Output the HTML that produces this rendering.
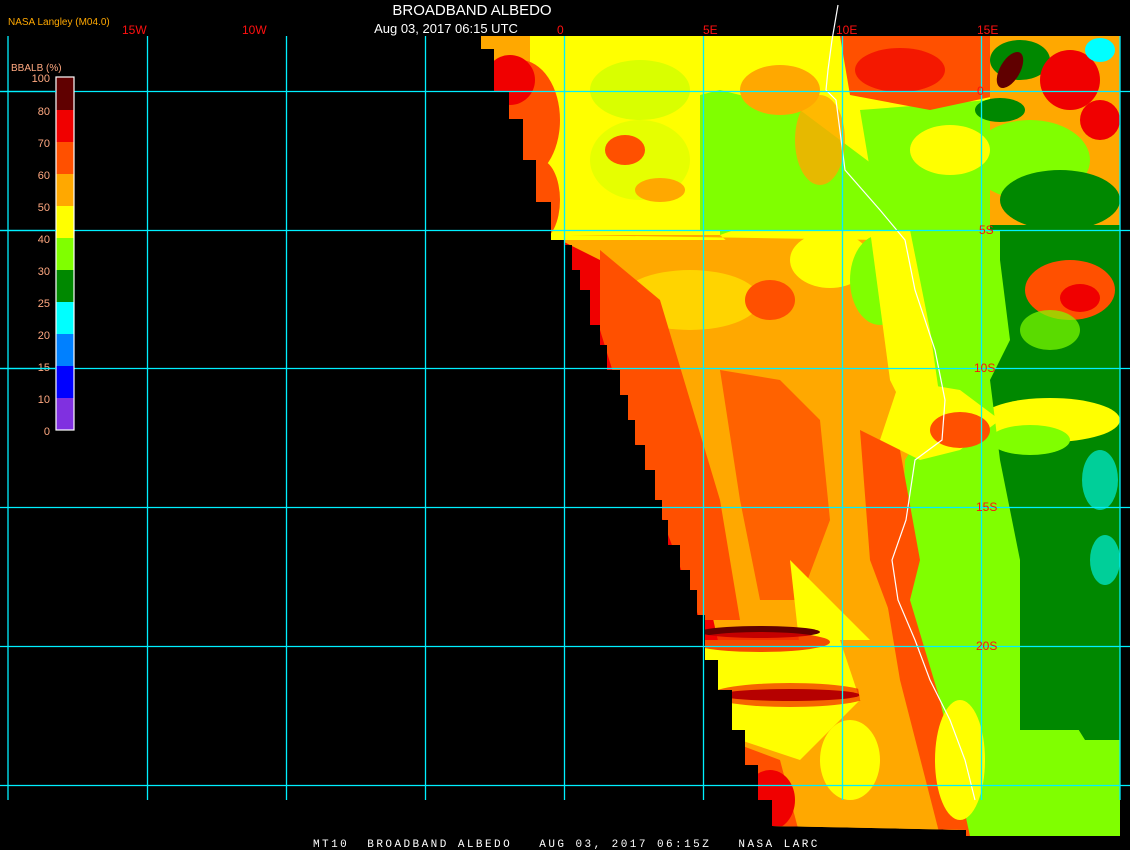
<!DOCTYPE html>
<html><head><meta charset="utf-8"><style>
html,body{margin:0;padding:0;background:#000;width:1130px;height:850px;overflow:hidden}
svg{display:block}
text{font-family:"Liberation Sans",sans-serif}
</style></head><body>
<svg width="1130" height="850" viewBox="0 0 1130 850" xmlns="http://www.w3.org/2000/svg">
<defs>
<clipPath id="d"><polygon points="481,36 1120,36 1120,836 966,836 966,830 772,826 772,800 758,800 758,765 745,765 745,730 732,730 732,690 718,690 718,660 705,660 705,615 697,615 697,590 690,590 690,570 680,570 680,545 668,545 668,520 662,520 662,500 655,500 655,470 645,470 645,445 635,445 635,420 628,420 628,395 620,395 620,370 607,370 607,345 600,345 600,325 590,325 590,290 580,290 580,270 572,270 572,245 565,245 565,240 551,240 551,202 536,202 536,160 523,160 523,119 509,119 509,92 494,92 494,49 481,49"/></clipPath>
</defs>
<g clip-path="url(#d)">
<rect x="470" y="30" width="660" height="810" fill="#ffa800"/>
<rect x="470" y="30" width="660" height="210" fill="#ffff00"/>
<polygon points="700,95 720,90 800,110 880,170 920,230 700,230" fill="#80ff00"/>
<polygon points="720,150 760,150 790,210 720,235" fill="#80ff00"/>
<polygon points="860,110 990,100 1000,230 900,235 870,170" fill="#80ff00"/>
<ellipse cx="640" cy="90" rx="50" ry="30" fill="#c0ff00" opacity=".6"/>
<ellipse cx="640" cy="160" rx="50" ry="40" fill="#c0ff00" opacity=".4"/>
<ellipse cx="780" cy="90" rx="40" ry="25" fill="#ffa800"/>
<ellipse cx="820" cy="140" rx="25" ry="45" fill="#ffa800" opacity=".8"/>
<rect x="470" y="30" width="60" height="60" fill="#ffa800"/>
<ellipse cx="520" cy="120" rx="40" ry="60" fill="#ff5000"/>
<ellipse cx="510" cy="80" rx="25" ry="25" fill="#f00000"/>
<ellipse cx="540" cy="200" rx="20" ry="40" fill="#ff5000"/>
<ellipse cx="625" cy="150" rx="20" ry="15" fill="#ff5000"/>
<ellipse cx="660" cy="190" rx="25" ry="12" fill="#ffa800"/>
<polygon points="840,36 1000,36 1000,95 930,110 850,95" fill="#ff5000"/>
<ellipse cx="900" cy="70" rx="45" ry="22" fill="#f00000" opacity=".7"/>
<rect x="990" y="36" width="130" height="190" fill="#ffa800"/>
<ellipse cx="1020" cy="60" rx="30" ry="20" fill="#008800"/>
<ellipse cx="1000" cy="110" rx="25" ry="12" fill="#008800"/>
<ellipse cx="1070" cy="80" rx="30" ry="30" fill="#f00000"/>
<ellipse cx="1010" cy="70" rx="10" ry="20" fill="#600000" transform="rotate(30 1010 70)"/>
<ellipse cx="1100" cy="120" rx="20" ry="20" fill="#f00000"/>
<ellipse cx="1100" cy="50" rx="15" ry="12" fill="#00ffff"/>
<ellipse cx="1030" cy="160" rx="60" ry="40" fill="#80ff00"/>
<ellipse cx="1060" cy="200" rx="60" ry="30" fill="#008800"/>
<ellipse cx="950" cy="150" rx="40" ry="25" fill="#ffff00"/>
<rect x="990" y="225" width="130" height="380" fill="#008800"/>
<ellipse cx="1070" cy="290" rx="45" ry="30" fill="#ff5000"/>
<ellipse cx="1080" cy="298" rx="20" ry="14" fill="#f00000"/>
<ellipse cx="1050" cy="330" rx="30" ry="20" fill="#80ff00" opacity=".7"/>
<ellipse cx="1050" cy="420" rx="70" ry="22" fill="#ffff00"/>
<ellipse cx="1030" cy="440" rx="40" ry="15" fill="#80ff00"/>
<ellipse cx="1100" cy="480" rx="18" ry="30" fill="#00ffff" opacity=".6"/>
<ellipse cx="1105" cy="560" rx="15" ry="25" fill="#00ffff" opacity=".6"/>
<polygon points="900,230 1000,230 1000,260 1010,340 990,380 1000,460 1020,560 1020,600 1060,600 1120,700 1120,836 940,836 920,700 900,600 905,460 930,420 930,340" fill="#80ff00"/>
<rect x="1020" y="600" width="100" height="130" fill="#008800"/>
<polygon points="1020,590 1120,590 1120,740 1085,740 1060,700 1030,680" fill="#008800"/>
<polygon points="960,720 1000,720 1000,836 966,836" fill="#80ff00"/>
<polygon points="560,240 870,240 900,300 920,420 900,470 880,650 700,650 640,470 600,340" fill="#ffa800"/>
<polygon points="570,235 720,235 760,270 800,300 870,300 880,240" fill="#ffa800"/>
<ellipse cx="690" cy="300" rx="70" ry="30" fill="#ffff00" opacity=".5"/>
<ellipse cx="770" cy="300" rx="25" ry="20" fill="#ff5000"/>
<ellipse cx="830" cy="260" rx="40" ry="28" fill="#ffff00"/>
<ellipse cx="880" cy="280" rx="30" ry="45" fill="#80ff00"/>
<polygon points="870,230 910,230 930,330 940,400 910,420 890,380" fill="#ffff00"/>
<polygon points="900,380 960,390 1000,420 960,450 920,460 880,440" fill="#ffff00"/>
<ellipse cx="960" cy="430" rx="30" ry="18" fill="#ff5000"/>
<polygon points="560,240 600,260 640,360 680,470 700,560 720,650 700,660 640,520 600,380 560,260" fill="#f00000"/>
<polygon points="600,250 660,300 690,400 720,500 740,620 700,620 640,460 600,330" fill="#ff5000"/>
<polygon points="720,370 780,380 820,420 830,520 800,600 760,600 740,500" fill="#ff5000" opacity=".8"/>
<polygon points="790,560 850,620 880,650 800,650" fill="#ffff00"/>
<polygon points="860,430 900,450 920,560 900,640 870,560" fill="#ff5000"/>
<rect x="700" y="640" width="200" height="200" fill="#ffa800"/>
<polygon points="700,640 840,640 860,700 800,760 740,740 700,700" fill="#ffff00"/>
<ellipse cx="760" cy="632" rx="60" ry="6" fill="#600000"/>
<ellipse cx="760" cy="642" rx="70" ry="10" fill="#f00000" opacity=".7"/>
<ellipse cx="790" cy="695" rx="70" ry="6" fill="#600000"/>
<ellipse cx="790" cy="695" rx="80" ry="12" fill="#f00000" opacity=".6"/>
<polygon points="700,730 780,760 800,836 700,836" fill="#ff5000"/>
<ellipse cx="770" cy="800" rx="25" ry="30" fill="#f00000"/>
<polygon points="850,640 900,640 940,780 960,836 900,836 890,740 860,700" fill="#ffa800"/>
<polygon points="880,560 910,600 940,700 970,836 940,836 900,680" fill="#ff5000"/>
<ellipse cx="850" cy="760" rx="30" ry="40" fill="#ffff00"/>
<ellipse cx="960" cy="760" rx="25" ry="60" fill="#ffff00"/>
</g>
<polyline points="838,5 832,40 828,70 826,90 836,100 845,170 880,210 905,240 915,290 935,350 945,400 942,440 915,460 906,520 892,560 898,600 915,640 930,680 950,720 965,760 975,800" fill="none" stroke="#fff" stroke-width="1.2"/>
<g stroke="#00f0ff" stroke-width="1.3">
<line x1="8" y1="36" x2="8" y2="800"/>
<line x1="147.5" y1="36" x2="147.5" y2="800"/>
<line x1="286.5" y1="36" x2="286.5" y2="800"/>
<line x1="425.5" y1="36" x2="425.5" y2="800"/>
<line x1="564.5" y1="36" x2="564.5" y2="800"/>
<line x1="703.5" y1="36" x2="703.5" y2="800"/>
<line x1="842.5" y1="36" x2="842.5" y2="800"/>
<line x1="981.5" y1="36" x2="981.5" y2="800"/>
<line x1="1120" y1="36" x2="1120" y2="800"/>
<line x1="0" y1="91.5" x2="1130" y2="91.5"/>
<line x1="0" y1="230.5" x2="1130" y2="230.5"/>
<line x1="0" y1="368.5" x2="1130" y2="368.5"/>
<line x1="0" y1="507.5" x2="1130" y2="507.5"/>
<line x1="0" y1="646.5" x2="1130" y2="646.5"/>
<line x1="0" y1="785.5" x2="1130" y2="785.5"/>
</g>
<g fill="#ff1010" font-size="12" style="font-family:'Liberation Mono',monospace">
<text x="122" y="34">15W</text><text x="242" y="34">10W</text><text x="557" y="34">0</text>
<text x="703" y="34">5E</text><text x="836" y="34">10E</text><text x="977" y="34">15E</text>
<text x="977" y="95">0</text><text x="979" y="234">5S</text><text x="974" y="372">10S</text>
<text x="976" y="511">15S</text><text x="976" y="650">20S</text>
</g>
<text x="472" y="15" fill="#fff" font-size="15" text-anchor="middle">BROADBAND ALBEDO</text>
<text x="446" y="33" fill="#fff" font-size="13" text-anchor="middle">Aug 03, 2017 06:15 UTC</text>
<text x="8" y="25" fill="#ffa800" font-size="10">NASA Langley (M04.0)</text>
<text x="11" y="71" fill="#ffa880" font-size="10">BBALB (%)</text>
<g>
<rect x="56" y="77" width="18" height="33" fill="#600000"/>
<rect x="56" y="110" width="18" height="32" fill="#f00000"/>
<rect x="56" y="142" width="18" height="32" fill="#ff5000"/>
<rect x="56" y="174" width="18" height="32" fill="#ffa800"/>
<rect x="56" y="206" width="18" height="32" fill="#ffff00"/>
<rect x="56" y="238" width="18" height="32" fill="#80ff00"/>
<rect x="56" y="270" width="18" height="32" fill="#008800"/>
<rect x="56" y="302" width="18" height="32" fill="#00ffff"/>
<rect x="56" y="334" width="18" height="32" fill="#0080ff"/>
<rect x="56" y="366" width="18" height="32" fill="#0000ff"/>
<rect x="56" y="398" width="18" height="32" fill="#8030e0"/>
<rect x="56" y="77" width="18" height="353" fill="none" stroke="#fff" stroke-width="1.2"/>
</g>
<g fill="#ffa880" font-size="11" text-anchor="end">
<text x="50" y="82">100</text><text x="50" y="115">80</text><text x="50" y="147">70</text>
<text x="50" y="179">60</text><text x="50" y="211">50</text><text x="50" y="243">40</text>
<text x="50" y="275">30</text><text x="50" y="307">25</text><text x="50" y="339">20</text>
<text x="50" y="371">15</text><text x="50" y="403">10</text><text x="50" y="435">0</text>
</g>
<g stroke="#00f0ff" stroke-width="1.3"><line x1="0" y1="91.5" x2="56" y2="91.5"/><line x1="0" y1="230.5" x2="56" y2="230.5"/><line x1="0" y1="368.5" x2="56" y2="368.5"/></g>
<text x="313" y="847" fill="#fff" font-size="11" style="font-family:'Liberation Mono',monospace;letter-spacing:2.45px;white-space:pre" xml:space="preserve">MT10  BROADBAND ALBEDO   AUG 03, 2017 06:15Z   NASA LARC</text>
</svg>
</body></html>
